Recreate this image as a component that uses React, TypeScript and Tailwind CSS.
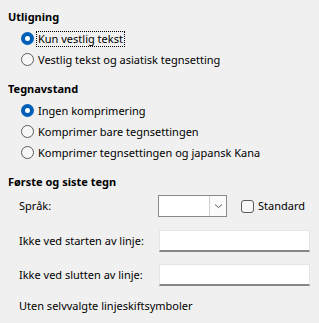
import React, { useState } from 'react';

const Radio = ({ checked }: { checked: boolean }) =>
  checked ? (
    <span className="w-[13px] h-[13px] rounded-full bg-[#005fb8] flex items-center justify-center shrink-0">
      <span className="w-[5px] h-[5px] rounded-full bg-white" />
    </span>
  ) : (
    <span className="w-[13px] h-[13px] rounded-full border border-[#5c5c5c] bg-[#f7f7f7] shrink-0" />
  );

const RadioRow = ({
  label,
  checked,
  focus,
  onClick,
  className = '',
}: {
  label: string;
  checked: boolean;
  focus?: boolean;
  onClick: () => void;
  className?: string;
}) => (
  <div className={`flex items-center h-[21px] pl-[13px] ${className}`} onClick={onClick}>
    <Radio checked={checked} />
    <span
      className={`ml-[2px] px-[1px] leading-[14px] border border-dotted ${focus ? 'border-black' : 'border-transparent'}`}
    >
      {label}
    </span>
  </div>
);

export default function App() {
  const [align, setAlign] = useState(0);
  const [spacing, setSpacing] = useState(0);
  const [std, setStd] = useState(false);

  return (
    <div
      className="w-[319px] h-[323px] bg-[#f0f0f0] text-black text-[11px] pl-2 pt-[7px] overflow-hidden"
      style={{ fontFamily: '"Noto Sans", "Open Sans", sans-serif' }}
    >
      <div className="h-[20px] flex items-center font-bold">Utligning</div>
      <RadioRow className="mt-[1px]" label="Kun vestlig tekst" checked={align === 0} focus onClick={() => setAlign(0)} />
      <RadioRow label="Vestlig tekst og asiatisk tegnsetting" checked={align === 1} onClick={() => setAlign(1)} />

      <div className="h-[20px] flex items-center font-bold mt-[9px]">Tegnavstand</div>
      <RadioRow className="mt-[1px]" label="Ingen komprimering" checked={spacing === 0} onClick={() => setSpacing(0)} />
      <RadioRow label="Komprimer bare tegnsettingen" checked={spacing === 1} onClick={() => setSpacing(1)} />
      <RadioRow label="Komprimer tegnsettingen og japansk Kana" checked={spacing === 2} onClick={() => setSpacing(2)} />

      <div className="h-[20px] flex items-center font-bold mt-[9px]">Første og siste tegn</div>

      <div className="flex items-center h-[22px] mt-[3px] pl-[11px]">
        <span className="w-[139px]">Språk:</span>
        <div className="w-[69px] h-[22px] border border-[#8a8a8a] bg-white flex justify-end">
          <div className="w-[17px] h-full border-l border-[#d0d0d0] bg-[#fbfbfb] flex items-center justify-center">
            <svg width="9" height="6" viewBox="0 0 9 6">
              <path d="M1 1.5 L4.5 4.5 L8 1.5" fill="none" stroke="#606060" strokeWidth="1" />
            </svg>
          </div>
        </div>
        <div className="flex items-center ml-[14px]" onClick={() => setStd(!std)}>
          <span className="w-[13px] h-[13px] rounded-[3px] border border-[#5c5c5c] bg-[#f7f7f7] flex items-center justify-center">
            {std && (
              <svg width="9" height="7" viewBox="0 0 9 7">
                <path d="M1 3.5 L3.5 6 L8 1" fill="none" stroke="#000" strokeWidth="1.2" />
              </svg>
            )}
          </span>
          <span className="ml-[4px]">Standard</span>
        </div>
      </div>

      <div className="flex items-center h-[22px] mt-[13px] pl-[11px]">
        <span className="w-[140px]">Ikke ved starten av linje:</span>
        <div className="w-[151px] h-[22px] bg-white border border-[#e5e5e5] border-b-2 border-b-[#868686]" />
      </div>

      <div className="flex items-center h-[22px] mt-[12px] pl-[11px]">
        <span className="w-[140px]">Ikke ved slutten av linje:</span>
        <div className="w-[151px] h-[22px] bg-white border border-[#e5e5e5] border-b-2 border-b-[#868686]" />
      </div>

      <div className="h-[20px] flex items-center mt-[10px] pl-[11px]">Uten selvvalgte linjeskiftsymboler</div>
    </div>
  );
}
